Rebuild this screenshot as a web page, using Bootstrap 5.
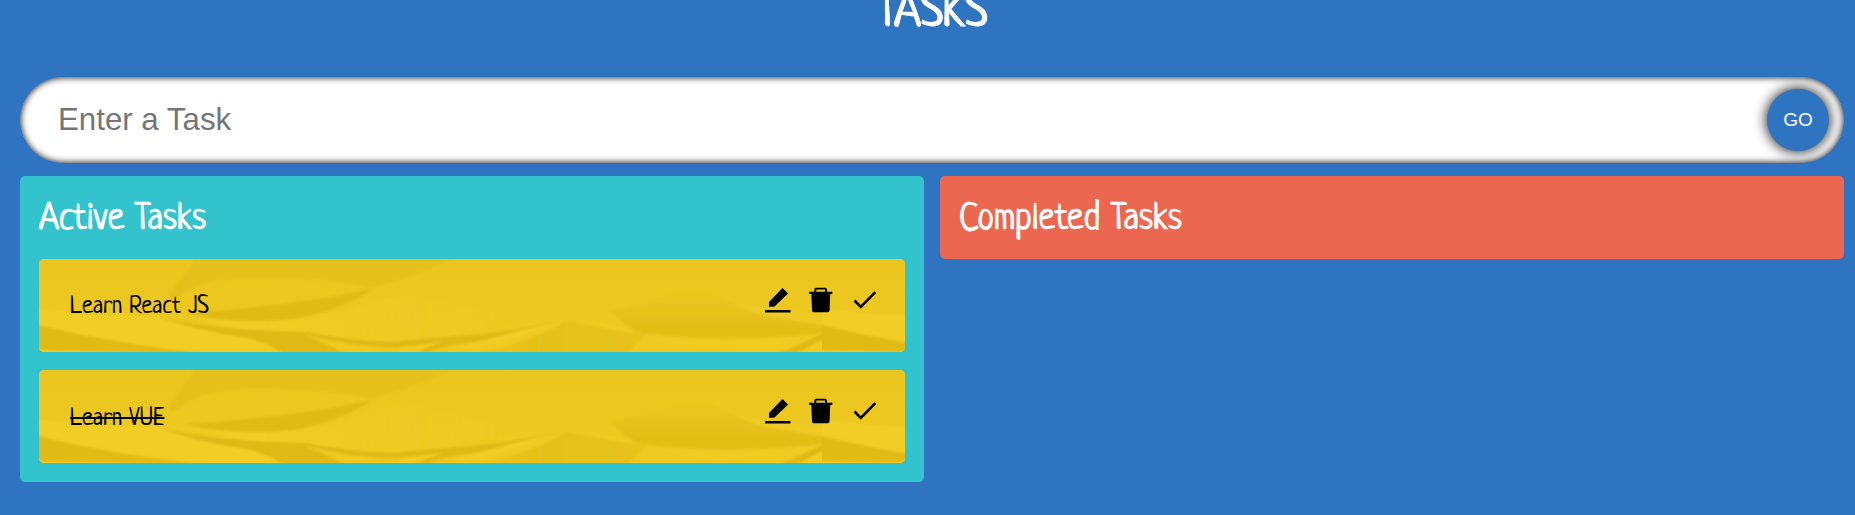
<!DOCTYPE html>
<html lang="en">
<head>
<meta charset="utf-8">
<meta name="viewport" content="width=device-width, initial-scale=1">
<title>Tasks</title>
<link rel="stylesheet" href="https://cdn.jsdelivr.net/npm/bootstrap@5.3.0/dist/css/bootstrap.min.css">
<style>
body{background:#2f74c0;font-family:Neucha,Lato,sans-serif;height:515px;overflow:hidden}
.page{padding:0 11px 0 20px}
.title-row{height:77px;display:flex;justify-content:center;align-items:flex-start}
.title-text{font-size:50px;line-height:60px;margin-top:-16px;color:#fff;font-weight:400;-webkit-text-stroke:.8px #fff}
.task-form{height:86px;margin-bottom:13px}
.task-input{height:86px;border:0;border-radius:43px;padding:0 38px;font:31.25px "Liberation Sans",Arial,sans-serif;color:#333;background:#fff;box-shadow:inset 0 0 7px #000}
.task-input::placeholder{color:#757575;opacity:1}
.go-btn{right:15px;top:12px;width:62px;height:62px;border:0;background:#2f74c0;color:#fff;font:19px "Liberation Sans",Arial,sans-serif;box-shadow:0 0 14px #000}
.form-clip{border-radius:43px;overflow:hidden}
.boards{gap:16px}
.board{flex:1 1 0;border-radius:5px;padding:19px}
.board-active{background:#33c3cd}
.board-done{background:#eb6750;height:83px}
.board-title{font-size:37.5px;line-height:50px;height:64px;margin:0;color:#fff;font-weight:400;white-space:nowrap;-webkit-text-stroke:.5px #fff}
.task{height:93px;border-radius:5px;overflow:hidden;background:#eac61f;color:#000}
.task + .task{margin-top:18px}
.task-text{font-size:25px;line-height:30px;margin:3px 0 0 31px}
.task-text.text-decoration-line-through{margin-top:5px;text-decoration-thickness:2px}
.task-icons{margin:-13px 21px 0 0;gap:9px}
.task-icons svg{width:35px;height:35px;display:block}
.texture{inset:0;width:100%;height:100%}
</style>
</head>
<body>
<svg width="0" height="0" class="position-absolute" aria-hidden="true">
  <defs>
    <linearGradient id="base" x1="0" y1="0" x2="0" y2="1"><stop offset="0" stop-color="#e9c51e"/><stop offset="1" stop-color="#eeca23"/></linearGradient>
    <linearGradient id="lens" x1="0" y1="0" x2="0" y2="1"><stop offset="0" stop-color="#e3bf19" stop-opacity="0"/><stop offset=".75" stop-color="#e3bf19"/></linearGradient>
    <linearGradient id="glow" x1="0" y1="0" x2="1" y2="0"><stop offset="0" stop-color="#f1cd26"/><stop offset="1" stop-color="#f1cd26" stop-opacity="0"/></linearGradient>
    <linearGradient id="hill" x1="0" y1="0" x2="1" y2="0"><stop offset="0" stop-color="#e5c11a" stop-opacity=".4"/><stop offset=".4" stop-color="#e5c11a"/><stop offset="1" stop-color="#e7c31c"/></linearGradient>
    <filter id="soft" x="-5%" y="-5%" width="110%" height="110%"><feGaussianBlur stdDeviation="1"/></filter>
    <clipPath id="tileclip"><path d="M0 0H783V93H0z"/></clipPath>
    <g id="folds" clip-path="url(#tileclip)">
      <path fill="url(#base)" d="M0 0H783V93H0z"/>
      <g filter="url(#soft)">
        <path fill="#e5c11a" d="M158-4 C150 15 134 22 130 42 L141 38 Q160 20 208 18 Q270 16 331 28 Q365 22 420-4z"/>
        <path fill="#f1cd26" d="M-4 49 Q60 58 119 57 Q190 78 260 80 L300 97H-4z"/>
        <path fill="url(#glow)" d="M130 56 Q220 70 298 53 L370 34 L490 62 L420 74 Q380 84 340 84 Q290 72 228 74z"/>
        <path fill="#e0bb16" d="M-4 65 Q64 83 175 96 L80 93 -4 91z"/>
        <path fill="#e0bb17" d="M145 54 Q250 48 334 30 Q300 52 254 60 Q200 66 145 54z"/>
        <path fill="#dfba15" d="M119 58 Q180 72 268 73 Q320 84 361 82 Q395 79 418 77 Q460 75 521 62 Q475 76 435 83 Q405 86 388 94 L361 88 Q325 90 264 75 Q290 86 311 97H248 Q230 83 202 78 Q160 72 119 58z"/>
        <path fill="#f1cd26" d="M361 88 Q385 86 405 82 L374 94H358z"/>
        <path fill="#f1cd26" d="M409 95 Q440 80 515 64 Q470 84 430 89z"/>
        <path fill="url(#hill)" d="M435 95 Q495 82 528 62 Q560 70 610 74 L585 97z"/>
        <path fill="url(#lens)" d="M568 51 C600 48 630 35 650 31 C668 28 700 50 722 56 L787 67V75 L722 79 Q640 82 596 72z"/>
        <path fill="#f1cd26" d="M540 60 Q570 64 600 75 L570 70z" opacity=".6"/>
        <path fill="#f1cd26" d="M600 77 Q660 83 722 81 L787 74 L734 95 Q660 91 600 77z" opacity=".5"/>
        <path fill="#dfba15" d="M742 94 Q764 84 787 73V79L756 95z"/>
        <path fill="#f1cd26" d="M756 95 L787 80V97z"/>
        <path fill="#efcb24" d="M695 46 Q735 49 787 56V67L725 57z" opacity=".6"/>
      </g>
    </g>
    <symbol id="ico-edit" viewBox="0 0 35 35"><path d="M8 20 21.5 6 27 11.4 13.5 24.5 8 25zM4 28h25.5v2.5H4z"/></symbol>
    <symbol id="ico-trash" viewBox="0 0 35 35"><path fill-rule="evenodd" d="M9.3 9.8V7.5Q9.3 5.7 11 5.7H20.3Q22 5.7 22 7.5V9.8H27.3V12H25.2L24.6 28.5Q24.5 30.3 22.7 30.3H8.8Q7.1 30.3 7 28.5L6.3 12H4.2V9.8zM11.3 9.8H20V7.5H11.3z"/></symbol>
    <symbol id="ico-check" viewBox="0 0 35 35"><path d="m5.5 18.5 6.3 6.5L26.3 10.2" fill="none" stroke="#000" stroke-width="2.6"/></symbol>
  </defs>
</svg>
<main class="page">
  <header class="title-row"><h1 class="title-text mb-0">TASKS</h1></header>
  <form class="task-form position-relative form-clip">
    <input class="task-input w-100 d-block" type="text" placeholder="Enter a Task" aria-label="Enter a Task">
    <button class="go-btn position-absolute rounded-circle p-0" type="button">GO</button>
  </form>
  <div class="boards d-flex align-items-start">
    <section class="board board-active">
      <h2 class="board-title">Active Tasks</h2>
      <article class="task position-relative d-flex align-items-center justify-content-between">
        <svg class="texture position-absolute" aria-hidden="true"><use href="#folds"/><use href="#folds" x="783"/></svg>
        <div class="task-text position-relative">Learn React JS</div>
        <div class="task-icons position-relative d-flex"><svg><use href="#ico-edit"/></svg><svg><use href="#ico-trash"/></svg><svg><use href="#ico-check"/></svg></div>
      </article>
      <article class="task position-relative d-flex align-items-center justify-content-between">
        <svg class="texture position-absolute" aria-hidden="true"><use href="#folds"/><use href="#folds" x="783"/></svg>
        <div class="task-text position-relative text-decoration-line-through">Learn VUE</div>
        <div class="task-icons position-relative d-flex"><svg><use href="#ico-edit"/></svg><svg><use href="#ico-trash"/></svg><svg><use href="#ico-check"/></svg></div>
      </article>
    </section>
    <section class="board board-done">
      <h2 class="board-title">Completed Tasks</h2>
    </section>
  </div>
</main>
<script src="https://cdn.jsdelivr.net/npm/bootstrap@5.3.0/dist/js/bootstrap.bundle.min.js"></script>
</body>
</html>
